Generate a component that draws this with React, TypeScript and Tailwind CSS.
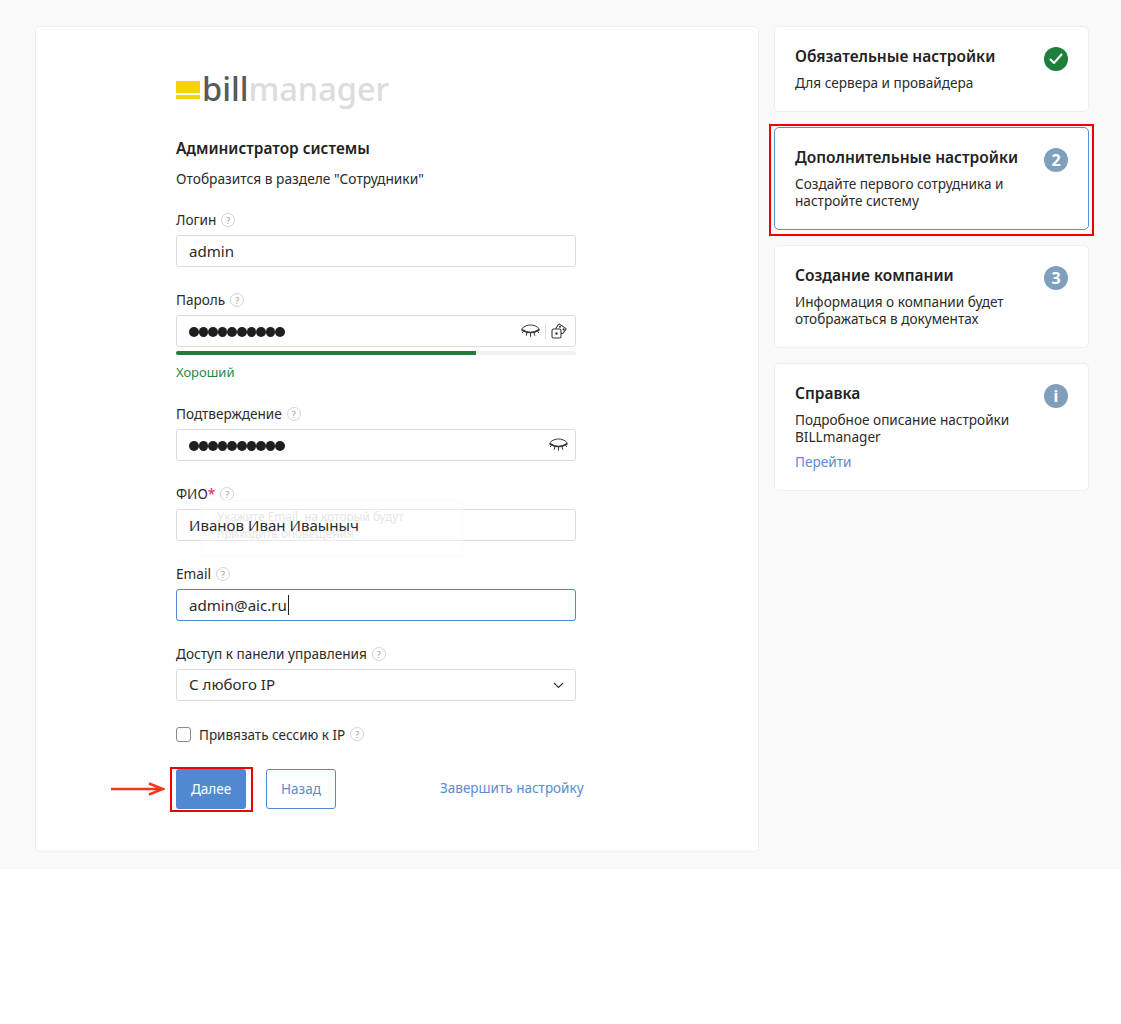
import { ReactNode } from "react";

// Small grey "?" next to field labels
function Hint() {
    return (
        <span className="ml-[5px] flex h-[14px] w-[14px] items-center justify-center rounded-full border border-[#d4d4d4] text-[9px] leading-none text-[#9a9a9a]">
            ?
        </span>
    );
}

function Label({ children }: { children: ReactNode }) {
    return (
        <div className="mb-[5px] flex h-[20px] items-center text-[13.6px] leading-[20px] text-[#2b2b2b]">
            {children}
            <Hint />
        </div>
    );
}

function EyeClosed() {
    return (
        <svg width="19" height="14" viewBox="0 0 19 14" fill="none" stroke="#343a40" strokeWidth="1">
            <path d="M.5 5C3.5 1.8 6.5 1 9.5 1s6 .8 9 4" />
            <path d="M.5 5.5C3.5 7.6 6.5 8.5 9.5 8.5s6-.9 9-3" strokeWidth="1.6" />
            <path d="M2.5 7l-1.3 2M6 8.3l-.8 3.4M13 8.3l.8 3.4M16.5 7l1.300 2M9.5 8.5v4.2" />
        </svg>
    );
}

function Dice() {
    return (
        <svg width="16" height="16" viewBox="0 0 16 16" fill="none" stroke="#343a40" strokeWidth="1.1">
            <rect x="1" y="6" width="9" height="9" rx="1.5" />
            <path d="M4.5 6l3-4.700a.8.8 0 0 1 1-.2l6.200 4.300a.8.8 0 0 1 .2 1L11.800 10.500H10" />
            <circle cx="5.5" cy="10.5" r=".7" fill="#343a40" />
            <circle cx="9" cy="3.8" r=".5" fill="#343a40" />
            <circle cx="12.6" cy="6.4" r=".5" fill="#343a40" />
        </svg>
    );
}

function Input({ children, focused }: { children: ReactNode; focused?: boolean }) {
    return (
        <div
            className={
                "relative flex h-[32px] w-[400px] items-center rounded-[3px] border bg-white pl-[12px] pr-[8px] text-[15.1px] text-[#2b2b2b] " +
                (focused ? "border-[#4f86cf]" : "border-[#dcdcdc]")
            }
        >
            {children}
        </div>
    );
}

function Dots() {
    return (
        <div className="mt-[1px] flex">
            {Array.from({ length: 10 }).map((_, i) => (
                <span key={i} className="h-[10px] w-[9.6px] rounded-full bg-[#1f1f1f]" />
            ))}
        </div>
    );
}

function Badge({ children }: { children: ReactNode }) {
    return (
        <div className="absolute right-[20px] top-[20px] flex h-[24px] w-[24px] items-center justify-center rounded-full bg-[#7f9fbd] text-[16px] font-bold text-white">
            {children}
        </div>
    );
}

function StepCard({ title, lines, badge, active, link }: { title: string; lines: string[]; badge: ReactNode; active?: boolean; link?: string }) {
    return (
        <div
            className={
                "relative rounded-[5px] border bg-white px-[20px] pb-[20px] pt-[19px] " +
                (active ? "border-[#5b8fd3]" : "border-[#eeeeee]")
            }
        >
            <div className="h-[20px] text-[15.5px] font-semibold leading-[20px] text-[#222222]">{title}</div>
            <div className="mt-[8px] text-[13.6px] leading-[17px] text-[#2b2b2b]">
                {lines.map((l) => (
                    <div key={l}>{l}</div>
                ))}
            </div>
            {link && <div className="-mb-px mt-[8px] text-[13.6px] leading-[18px] text-[#5b8bd0]">{link}</div>}
            {badge}
            {active && <div className="absolute -inset-x-[6px] -bottom-[7px] -top-[4px] border-2 border-[#ee0000]" />}
        </div>
    );
}

export default function App() {
    return (
        <div className="min-h-[1024px] bg-white font-['Noto_Sans',sans-serif]">
            <div className="flex h-[869px] items-start gap-[15px] bg-[#f9f9f9] pl-[35px] pt-[26px]">
                {/* Form */}
                <div className="h-[826px] w-[724px] rounded-[5px] border border-[#eeeeee] bg-white pl-[140px] pt-[43px]">
                    <div className="flex h-[38px] items-center">
                        <div className="mr-[2px] mt-[1px] flex flex-col gap-[2px]">
                            <div className="h-[12px] w-[24px] bg-[#f7d308]" />
                            <div className="h-[4px] w-[24px] bg-[#f7d308]" />
                        </div>
                        <span className="text-[32.5px] font-medium leading-[38px] text-[#58595b]">bill</span>
                        <span className="text-[32.5px] font-medium leading-[38px] text-[#dcdcdc]">manager</span>
                    </div>

                    <div className="mt-[29px] h-[24px] text-[15.4px] font-semibold leading-[24px] text-[#222222]">Администратор системы</div>
                    <div className="mt-[8px] h-[20px] text-[13.75px] leading-[20px] text-[#2b2b2b]">Отобразится в разделе "Сотрудники"</div>

                    <div className="mt-[21px]">
                        <Label>Логин</Label>
                        <Input>admin</Input>
                    </div>

                    <div className="mt-[23px]">
                        <Label>Пароль</Label>
                        <Input>
                            <Dots />
                            <div className="ml-auto flex items-center">
                                <EyeClosed />
                                <div className="mx-[5px] h-[16px] w-px bg-[#dcdcdc]" />
                                <Dice />
                            </div>
                        </Input>
                        <div className="mt-[4px] h-[4px] w-[400px] rounded-[2px] bg-[#f0f0f0]">
                            <div className="h-[4px] w-[300px] rounded-l-[2px] bg-[#1e7e3c]" />
                        </div>
                        <div className="mt-[7px] h-[20px] text-[13px] leading-[20px] text-[#1e8a44]">Хороший</div>
                    </div>

                    <div className="mt-[22px]">
                        <Label>Подтверждение</Label>
                        <Input>
                            <Dots />
                            <div className="ml-auto mr-[-1px] flex items-center">
                                <EyeClosed />
                            </div>
                        </Input>
                    </div>

                    <div className="mt-[23px]">
                        <div className="mb-[5px] flex h-[20px] items-center text-[13.6px] leading-[20px] text-[#2b2b2b]">
                            ФИО<span className="text-[#e6185e]">*</span>
                            <Hint />
                        </div>
                        <Input>
                            {/* fading tooltip caught mid transition */}
                            <div className="absolute left-[24px] top-[-10px] h-[57px] w-[262px] rounded-[4px] border border-[#fafafa] bg-white/40 px-[15px] pt-[7px] text-[11.8px] leading-[17px] text-[#e6e6e6]">
                                Укажите Email, на который будут приходить оповещения
                            </div>
                            <span className="relative">Иванов Иван Иваыныч</span>
                        </Input>
                    </div>

                    <div className="mt-[23px]">
                        <Label>Email</Label>
                        <Input focused>
                            admin@aic.ru
                            <span className="ml-px h-[20px] w-px bg-[#222222]" />
                        </Input>
                    </div>

                    <div className="mt-[23px]">
                        <Label>Доступ к панели управления</Label>
                        <Input>
                            <span className="-mt-[2px]">С любого IP</span>
                            <svg className="ml-auto mr-[3px]" width="11" height="7" viewBox="0 0 11 7" fill="none" stroke="#343a40" strokeWidth="1.2">
                                <path d="M1 1l4.5 4.5L10 1" />
                            </svg>
                        </Input>
                    </div>

                    <div className="mt-[23px] flex h-[20px] items-center text-[13.5px] text-[#2b2b2b]">
                        <span className="mr-[8px] h-[15px] w-[15px] rounded-[3px] border border-[#8a8a8a] bg-white" />
                        <span className="mt-[2px]">Привязать сессию к IP</span>
                        <Hint />
                    </div>

                    <div className="mt-[25px] flex h-[40px] items-center">
                        <div className="relative">
                            <div className="flex h-[40px] w-[70px] items-center justify-center rounded-[3px] bg-[#5189d1] text-[13.5px] text-white">Далее</div>
                            <div className="absolute -bottom-[3px] -left-[6px] -right-[7px] -top-[2px] border-2 border-[#ee0000]" />
                            <svg className="absolute left-[-65px] top-[12px]" width="54" height="16" viewBox="0 0 54 16" fill="none" stroke="#f4361c" strokeWidth="2.5">
                                <path d="M0 8h52M38 2.5l14 5.5-14 5.5" />
                            </svg>
                        </div>
                        <div className="ml-[20px] flex h-[40px] w-[70px] items-center justify-center rounded-[3px] border border-[#5189d1] text-[13.5px] text-[#5b8bd0]">Назад</div>
                        <div className="mb-[1px] ml-[104px] text-[13.5px] text-[#5b8bd0]">Завершить настройку</div>
                    </div>
                </div>

                {/* Steps */}
                <div className="flex w-[315px] flex-col gap-[15px]">
                    <StepCard
                        title="Обязательные настройки"
                        lines={["Для сервера и провайдера"]}
                        badge={
                            <div className="absolute right-[20px] top-[20px] flex h-[24px] w-[24px] items-center justify-center rounded-full bg-[#1e7e3c]">
                                <svg width="14" height="12" viewBox="0 0 14 12" fill="none" stroke="white" strokeWidth="2" strokeLinecap="round" strokeLinejoin="round">
                                    <path d="M1.5 6.5l3.5 3.5 7.5-8.5" />
                                </svg>
                            </div>
                        }
                    />
                    <StepCard active title="Дополнительные настройки" lines={["Создайте первого сотрудника и", "настройте систему"]} badge={<Badge>2</Badge>} />
                    <StepCard title="Создание компании" lines={["Информация о компании будет", "отображаться в документах"]} badge={<Badge>3</Badge>} />
                    <StepCard title="Справка" lines={["Подробное описание настройки", "BILLmanager"]} link="Перейти" badge={<Badge>i</Badge>} />
                </div>
            </div>
        </div>
    );
}
